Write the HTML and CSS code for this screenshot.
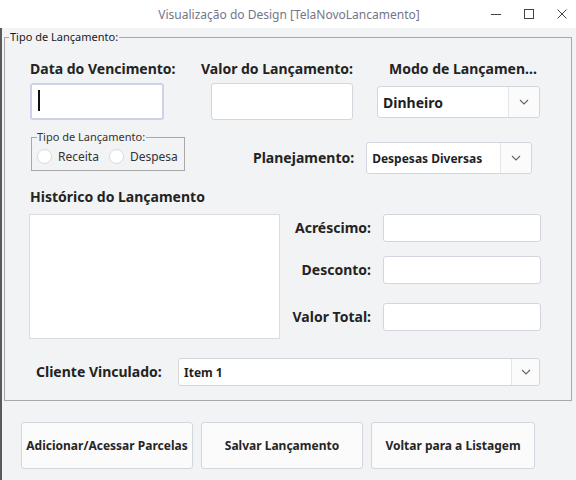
FILE: index.html
```html
<!DOCTYPE html>
<html lang="pt-BR">
<head>
<meta charset="utf-8">
<title>TelaNovoLancamento</title>
<link rel="stylesheet" href="styles.css">
</head>
<body>
<div class="window">
  <div class="titlebar">
    <span class="title">Visualização do Design [TelaNovoLancamento]</span>
    <div class="controls">
      <svg class="ctl" width="10" height="10" viewBox="0 0 10 10"><path d="M0 5.5H10" stroke="#444" stroke-width="1"/></svg>
      <svg class="ctl" width="10" height="10" viewBox="0 0 10 10"><rect x="0.5" y="0.5" width="9" height="9" fill="none" stroke="#444" stroke-width="1"/></svg>
      <svg class="ctl" width="10" height="10" viewBox="0 0 10 10"><path d="M0.5 0.5L9.5 9.5M9.5 0.5L0.5 9.5" stroke="#444" stroke-width="1"/></svg>
    </div>
  </div>
  <div class="content">
    <fieldset class="main">
      <legend>Tipo de Lançamento:</legend>
      <div class="row1">
        <div class="field f-data">
          <label class="lbl">Data do Vencimento:</label>
          <div class="input focused"><span class="caret"></span></div>
        </div>
        <div class="field f-valor">
          <label class="lbl">Valor do Lançamento:</label>
          <div class="input"></div>
        </div>
        <div class="field f-modo">
          <label class="lbl">Modo de Lançamen...</label>
          <div class="combo combo-modo">
            <span class="combo-text big">Dinheiro</span>
            <span class="combo-btn"><svg width="10" height="6" viewBox="0 0 10 6"><path d="M1 1L5 5L9 1" fill="none" stroke="#666" stroke-width="1.2"/></svg></span>
          </div>
        </div>
      </div>
      <div class="row2">
        <fieldset class="tipo">
          <legend>Tipo de Lançamento:</legend>
          <div class="radios">
            <span class="radio"></span><span class="rtext">Receita</span>
            <span class="radio r2"></span><span class="rtext">Despesa</span>
          </div>
        </fieldset>
        <label class="lbl plan">Planejamento:</label>
        <div class="combo combo-plan">
          <span class="combo-text">Despesas Diversas</span>
          <span class="combo-btn"><svg width="10" height="6" viewBox="0 0 10 6"><path d="M1 1L5 5L9 1" fill="none" stroke="#666" stroke-width="1.2"/></svg></span>
        </div>
      </div>
      <div class="row3">
        <div class="hist">
          <label class="lbl">Histórico do Lançamento</label>
          <div class="textarea"></div>
        </div>
        <div class="values">
          <label class="lbl vl">Acréscimo:</label><div class="vinput"></div>
          <label class="lbl vl r-gap1">Desconto:</label><div class="vinput r-gap1"></div>
          <label class="lbl vl r-gap2">Valor Total:</label><div class="vinput r-gap2"></div>
        </div>
      </div>
      <div class="row4">
        <label class="lbl cli">Cliente Vinculado:</label>
        <div class="combo combo-cli">
          <span class="combo-text">Item 1</span>
          <span class="combo-btn"><svg width="10" height="6" viewBox="0 0 10 6"><path d="M1 1L5 5L9 1" fill="none" stroke="#666" stroke-width="1.2"/></svg></span>
        </div>
      </div>
    </fieldset>
    <div class="buttons">
      <button class="btn b1">Adicionar/Acessar Parcelas</button>
      <button class="btn b2">Salvar Lançamento</button>
      <button class="btn b3">Voltar para a Listagem</button>
    </div>
  </div>
</div>
</body>
</html>
```
FILE: styles.css
```css
* { box-sizing: border-box; }
html, body { margin: 0; padding: 0; }
body {
  width: 576px;
  height: 480px;
  overflow: hidden;
  font-family: "Noto Sans", "Open Sans", sans-serif;
  background: #f2f3f5;
  color: #262626;
}
.window { width: 576px; height: 480px; display: flex; flex-direction: column; }
.titlebar {
  height: 28px;
  background: #ffffff;
  display: flex;
  align-items: center;
  position: relative;
}
.title {
  flex: 1;
  text-align: center;
  font-size: 12px;
  color: #75758a;
  padding-left: 2px;
}
.controls {
  position: absolute;
  right: 0;
  top: 0;
  height: 28px;
  display: flex;
  align-items: center;
}
.ctl { margin-right: 23px; }
.ctl:last-child { margin-right: 9px; }

.content {
  flex: 1;
  border-left: 2px solid #5a5a5a;
}
fieldset.main {
  margin: 2px 0 0 2px;
  width: 568px;
  padding: 0 0 14px 0;
  border: 1px solid #a8a8a8;
  border-radius: 0;
}
fieldset.main > legend {
  font-size: 11px;
  line-height: 14px;
  margin-left: 4px;
  padding: 0 1px;
  color: #1a1a1a;
}
.lbl {
  font-size: 14px;
  font-weight: 700;
  line-height: 18px;
  color: #232323;
  white-space: nowrap;
  display: block;
}
.row1 { display: flex; padding-top: 16px; }
.field { display: flex; flex-direction: column; }
.f-data { margin-left: 25px; width: 171px; }
.f-valor { width: 176px; }
.f-valor .input { margin-left: 10px; width: 142px; }
.f-modo .lbl { margin-left: 12px; }
.input {
  background: #fff;
  border: 1px solid #d3d6de;
  border-radius: 3px;
  height: 37px;
  width: 134px;
  margin-top: 5px;
}
.input.focused {
  border: 2px solid #cdd2ea;
  padding: 5px 0 0 6px;
}
.caret {
  display: block;
  width: 2px;
  height: 21px;
  background: #111;
}
.combo {
  background: #fff;
  border: 1px solid #d3d6de;
  border-radius: 3px;
  display: flex;
  align-items: stretch;
}
.combo-text {
  flex: 1;
  display: flex;
  align-items: center;
  padding-left: 5px;
  font-size: 12px;
  font-weight: 700;
  color: #1f1f1f;
}
.combo-text.big { font-size: 14px; }
.combo-btn {
  width: 31px;
  border-left: 1px solid #e4e6eb;
  display: flex;
  align-items: center;
  justify-content: center;
  background: #fbfbfc;
  border-radius: 0 3px 3px 0;
}
.combo-modo { width: 163px; height: 32px; margin-top: 8px; }
.row2 { display: flex; align-items: flex-start; margin-top: 10px; }
fieldset.tipo {
  margin: 0 0 0 26px;
  width: 154px;
  height: 41px;
  padding: 0 0 0 5px;
  border: 1px solid #a8a8a8;
}
fieldset.tipo > legend {
  font-size: 11px;
  line-height: 14px;
  margin-left: 0;
  padding: 0 1px 0 0;
  color: #333;
}
.radios { display: flex; align-items: center; height: 26px; padding-bottom: 1px; }
.radio {
  width: 15px;
  height: 15px;
  border-radius: 50%;
  border: 1px solid #d6d9e0;
  background: #fff;
}
.r2 { margin-left: 10px; }
.rtext { font-size: 12px; color: #333; margin-left: 6px; line-height: 15px; }
.plan { margin-left: 68px; margin-top: 19px; }
.combo-plan { width: 166px; height: 32px; margin-left: 12px; margin-top: 12px; }
.row3 { display: flex; margin-top: 14px; }
.hist { margin-left: 24px; }
.hist .lbl { margin-left: 1px; }
.textarea {
  width: 251px;
  height: 125px;
  background: #fff;
  border: 1px solid #dadce2;
  margin-top: 8px;
}
.values {
  display: grid;
  grid-template-columns: 91px 158px;
  column-gap: 12px;
  align-items: center;
  align-content: start;
  margin-top: 26px;
}
.vl { text-align: right; }
.vinput {
  background: #fff;
  border: 1px solid #d3d6de;
  border-radius: 3px;
  height: 28px;
  width: 158px;
}
.r-gap1 { margin-top: 14px; }
.r-gap2 { margin-top: 19px; }
.lbl.r-gap1 { margin-top: 14px; }
.lbl.r-gap2 { margin-top: 19px; }
.row4 { display: flex; align-items: center; margin-top: 19px; }
.cli { margin-left: 31px; width: 142px; }
.combo-cli { width: 362px; height: 28px; }
.combo-cli .combo-btn { width: 28px; }
.buttons { display: flex; gap: 8px; margin: 21px 0 0 19px; }
.btn {
  height: 47px;
  background: #fbfbfc;
  border: 1px solid #d3d6de;
  border-radius: 3px;
  font-family: "Noto Sans", "Open Sans", sans-serif;
  font-size: 12px;
  font-weight: 700;
  color: #262626;
  padding: 0;
}
.b1 { width: 172px; }
.b2 { width: 162px; }
.b3 { width: 164px; }
```
